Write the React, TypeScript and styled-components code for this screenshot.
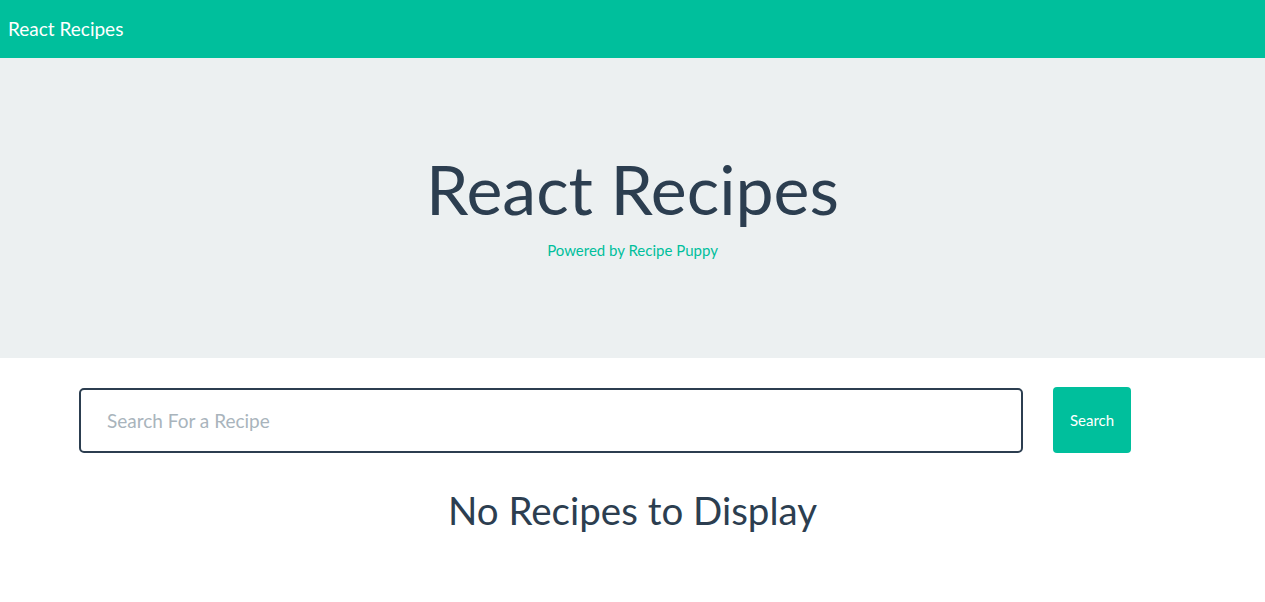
import styled, { createGlobalStyle } from "styled-components";

const GlobalStyle = createGlobalStyle`
  body {
    margin: 0;
    font-family: Lato, "Open Sans", sans-serif;
    color: #2c3e50;
    background: #ffffff;
  }
`;

const Navbar = styled.nav`
  height: 58px;
  background: #00bf9c;
  display: flex;
  align-items: center;
  padding: 0 8px;
  box-sizing: border-box;
`;

const Brand = styled.a`
  color: #ffffff;
  font-size: 19px;
  text-decoration: none;
  margin-top: -2px;
`;

const Jumbotron = styled.header`
  height: 300px;
  background: #ecf0f1;
  display: flex;
  flex-direction: column;
  align-items: center;
  padding-top: 88px;
  box-sizing: border-box;
`;

const Title = styled.h1`
  margin: 0;
  font-size: 68px;
  font-weight: 400;
  line-height: 86px;
`;

const Subtitle = styled.p`
  margin: 0;
  font-size: 15px;
  color: #00bf9c;
  line-height: 20px;
  margin-top: 8px;
`;

const Form = styled.form`
  display: flex;
  gap: 30px;
  padding: 30px 0 0 79px;
`;

const SearchInput = styled.input`
  width: 944px;
  height: 65px;
  box-sizing: border-box;
  border: 2px solid #2c3e50;
  border-radius: 5px;
  padding: 0 26px;
  font-family: Lato, sans-serif;
  font-size: 19px;
  color: #2c3e50;
  outline: none;
  &::placeholder {
    color: #a9b4bc;
  }
`;

const Button = styled.button`
  width: 78px;
  height: 66px;
  margin-top: -1px;
  border: none;
  border-radius: 4px;
  background: #00bf9c;
  color: #ffffff;
  font-family: Lato, sans-serif;
  font-size: 15px;
`;

const Empty = styled.h2`
  margin: 30px 0 0;
  text-align: center;
  font-size: 38.5px;
  font-weight: 400;
  line-height: 54px;
`;

export default function App() {
  return (
    <>
      <GlobalStyle />
      <Navbar>
        <Brand href="#">React Recipes</Brand>
      </Navbar>
      <Jumbotron>
        <Title>React Recipes</Title>
        <Subtitle>Powered by Recipe Puppy</Subtitle>
      </Jumbotron>
      <Form onSubmit={(e) => e.preventDefault()}>
        <SearchInput placeholder="Search For a Recipe" autoFocus />
        <Button type="submit">Search</Button>
      </Form>
      <Empty>No Recipes to Display</Empty>
    </>
  );
}
